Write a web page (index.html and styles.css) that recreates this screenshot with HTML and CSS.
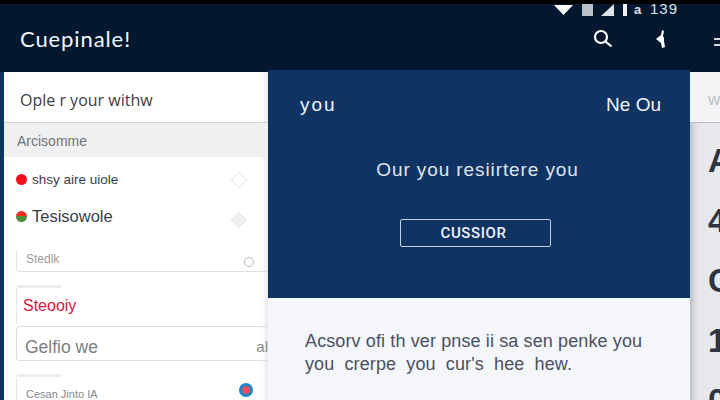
FILE: index.html
```html
<!DOCTYPE html>
<html lang="en">
  <head>
    <meta charset="UTF-8" />
    <title>Cuepinale</title>
    <link rel="stylesheet" href="styles.css">
  </head>
  <body>
    <div class="screen">
      <div class="topbar">
        <div class="topbar-main">
          <div class="status">
            <svg class="status-wifi" width="19" height="10" viewBox="0 0 19 10"><path d="M0 0h19L9.5 10z" fill="#fff"/></svg>
            <span class="status-sim"></span>
            <svg class="status-signal" width="13" height="12" viewBox="0 0 13 12"><path d="M13 0v12H0z" fill="#dfe4e8"/></svg>
            <span class="status-bar"></span>
            <span class="status-num">a</span>
            <span class="status-time">139</span>
          </div>
          <div class="appbar">
            <span class="app-title">Cuepinale!</span>
            <svg class="app-search" width="20" height="20" viewBox="0 0 20 20" fill="none" stroke="#fff" stroke-width="2.2"><circle cx="8" cy="8" r="6"/><path d="M12.5 12.5l6 5"/></svg>
            <svg class="app-back" width="10" height="18" viewBox="0 0 10 18"><path d="M7 0l2 1-1 5 1 2v3l1 6-3 1-1-5-5-4 5-4z" fill="#fff"/></svg>
          </div>
        </div>
        <div class="topbar-side">
          <span class="menu-line"></span>
          <span class="menu-line"></span>
        </div>
      </div>

      <div class="panels">
        <div class="sidebar">
          <div class="side-title">Ople r your withw</div>
          <div class="side-section">Arcisomme</div>
          <div class="side-row side-row-first">
            <span class="dot dot-red"></span>
            <span class="row-text">shsy aire uiole</span>
            <span class="diamond"></span>
          </div>
          <div class="side-row">
            <span class="dot dot-mixed"></span>
            <span class="row-text row-text-big">Tesisowole</span>
            <span class="diamond diamond-grey"></span>
          </div>
          <div class="field field-small">
            <span class="field-text">Stedlk</span>
            <span class="ring"></span>
          </div>
          <div class="field-label"></div>
          <div class="field field-open">
            <span class="field-red">Steooiy</span>
          </div>
          <div class="field field-large">
            <span class="field-big">Gelfio we</span>
            <span class="field-end">al</span>
          </div>
          <div class="field-label"></div>
          <div class="field field-last">
            <span class="field-tiny">Cesan Jinto IA</span>
            <span class="ring-blue"></span>
          </div>
        </div>

        <div class="center">
          <div class="hero">
            <div class="hero-top">
              <span class="hero-you">you</span>
              <span>Ne Ou</span>
            </div>
            <div class="hero-title">Our you resiirtere you</div>
            <div class="hero-button">CUSSIOR</div>
          </div>
          <div class="note">
            Acsorv ofi th ver pnse ii sa sen penke you<br>
            <span class="note-wide">you crerpe you cur's hee hew.</span>
          </div>
        </div>

        <div class="rail">
          <div class="rail-tab">W</div>
          <div class="rail-list">
            <span>A</span>
            <span>4</span>
            <span>C</span>
            <span>1</span>
            <span>0</span>
          </div>
        </div>
      </div>
    </div>
  </body>
</html>
```

FILE: styles.css
```css
* {
  box-sizing: border-box;
}

body {
  margin: 0;
  font-family: "Liberation Sans", Arial, sans-serif;
}

.screen {
  width: 720px;
  height: 400px;
  overflow: hidden;
  display: flex;
  flex-direction: column;
  background-color: #0f3463;
}

.topbar {
  height: 72px;
  flex-shrink: 0;
  display: flex;
  border-top: 4px solid #000;
  background-color: #03182f;
}

.topbar-main {
  width: 690px;
  flex-shrink: 0;
  padding-left: 20px;
  padding-right: 11px;
}

.status {
  height: 12px;
  display: flex;
  align-items: center;
  justify-content: flex-end;
  color: #dfe4e8;
}

.status-wifi {
  margin-right: 9px;
}

.status-sim {
  width: 11px;
  height: 12px;
  margin-right: 8px;
  background-color: #b9c0c6;
}

.status-signal {
  margin-right: 9px;
}

.status-bar {
  width: 4px;
  height: 12px;
  margin-right: 7px;
  background-color: #eef0f2;
}

.status-num {
  width: 9px;
  margin-right: 7px;
  margin-top: -2px;
  font-size: 13px;
  font-weight: bold;
}

.status-time {
  width: 29px;
  margin-top: -3px;
  font-size: 15px;
  letter-spacing: 1px;
}

.appbar {
  display: flex;
  align-items: center;
  margin-top: 9px;
}

.app-title {
  flex: 1;
  color: #f2f5f7;
  font-family: Lato, sans-serif;
  font-size: 22px;
  letter-spacing: 0.9px;
}

.app-search {
  margin-right: 42px;
}

.app-back {
  margin-right: 14px;
}

.topbar-side {
  flex: 1;
  display: flex;
  flex-direction: column;
  align-items: flex-end;
  gap: 4px;
  padding-top: 34px;
}

.menu-line {
  width: 6px;
  height: 2px;
  background-color: #d5d9dd;
}

.panels {
  flex: 1;
  display: flex;
  padding-left: 4px;
}

.sidebar {
  width: 264px;
  flex-shrink: 0;
  background-color: #fff;
  box-shadow: inset -10px 0 8px -8px #e2e4e8;
}

.side-title {
  height: 51px;
  padding: 18px 0 0 16px;
  color: #3c4045;
  font-family: "Open Sans", sans-serif;
  font-size: 16px;
  line-height: 20px;
  border-bottom: 1px solid #cfd2d4;
}

.side-section {
  height: 34px;
  padding: 10px 0 0 13px;
  color: #6f7478;
  font-size: 14px;
  line-height: 17px;
  background-color: #eef0f1;
}

.side-row {
  display: flex;
  align-items: center;
  height: 37px;
  padding-left: 12px;
  padding-right: 23px;
  color: #3a3e44;
}

.side-row-first {
  margin-top: 4px;
}

.dot {
  width: 11px;
  height: 11px;
  margin-right: 5px;
  border-radius: 50%;
}

.dot-red {
  background-color: #f2101f;
}

.dot-mixed {
  background: linear-gradient(#f0301f 50%, #4f8f3c 50%);
}

.row-text {
  flex: 1;
  font-size: 13.5px;
}

.row-text-big {
  font-size: 16.5px;
}

.diamond {
  width: 12px;
  height: 12px;
  transform: rotate(45deg);
  background-color: #fff;
  border: 1px solid #e9ebed;
}

.diamond-grey {
  margin-top: 6px;
  background-color: #eef0f1;
}

.field {
  display: flex;
  align-items: center;
  margin-left: 12px;
  padding-left: 9px;
  border-left: 1px solid #e2e4e7;
}

.field-small {
  height: 22px;
  margin-top: 15px;
  padding-right: 14px;
  border-bottom: 1px solid #dcdfe2;
  border-radius: 0 0 0 4px;
}

.field-text {
  flex: 1;
  margin-top: -4px;
  color: #9a9ea3;
  font-size: 12px;
}

.ring {
  width: 10px;
  height: 10px;
  margin-top: 3px;
  border: 1px solid #b5b9bd;
  border-radius: 50%;
}

.field-label {
  width: 44px;
  height: 3px;
  margin: 13px 0 0 13px;
  background-color: #eceef0;
}

.field-open {
  height: 36px;
  padding-left: 6px;
}

.field-red {
  color: #d8163c;
  font-size: 16px;
}

.field-large {
  height: 35px;
  margin-top: 2px;
  padding-left: 8px;
  border: 1px solid #dcdfe2;
  border-right: 0;
  border-radius: 4px 0 0 4px;
}

.field-big {
  flex: 1;
  margin-top: 8px;
  color: #7b7f84;
  font-size: 17.5px;
}

.field-end {
  margin-top: 6px;
  color: #85898d;
  font-size: 15px;
}

.field-last {
  height: 30px;
  padding-right: 15px;
  padding-top: 1px;
}

.field-tiny {
  flex: 1;
  color: #85898d;
  font-size: 11px;
  margin-top: 3px;
}

.ring-blue {
  width: 14px;
  height: 14px;
  margin-bottom: 5px;
  background-color: #e8505f;
  border: 3px solid #1a86c9;
  border-radius: 50%;
}

.center {
  width: 422px;
  flex-shrink: 0;
  display: flex;
  flex-direction: column;
  margin-top: -2px;
}

.hero {
  height: 228px;
  display: flex;
  flex-direction: column;
  align-items: center;
  padding: 24px 29px 0 32px;
  background-color: #0f3463;
  color: #f0f3f7;
}

.hero-top {
  width: 100%;
  display: flex;
  justify-content: space-between;
  font-size: 19px;
  line-height: 22px;
}

.hero-you {
  letter-spacing: 2px;
}

.hero-title {
  margin-top: 43px;
  margin-left: -6px;
  font-size: 19px;
  line-height: 22px;
  letter-spacing: 0.9px;
  color: #dfe5ec;
}

.hero-button {
  width: 151px;
  height: 28px;
  margin-top: 38px;
  margin-left: -10px;
  border: 1px solid #c3cfdc;
  border-radius: 2px;
  font-family: Roboto, sans-serif;
  font-size: 15px;
  font-weight: 500;
  letter-spacing: 0.6px;
  line-height: 27px;
  text-align: center;
  padding-right: 4px;
}

.note {
  flex: 1;
  padding: 32px 0 0 37px;
  background-color: #f4f6fa;
  color: #4a5160;
  font-size: 18px;
  letter-spacing: 0.12px;
  line-height: 23px;
}

.note-wide {
  word-spacing: 5px;
}

.rail {
  flex: 1;
  min-width: 0;
  overflow: hidden;
  background-color: #e6e8ec;
  box-shadow: inset 8px 0 6px -5px #b4b8be;
}

.rail-tab {
  height: 51px;
  padding: 21px 0 0 18px;
  color: #b5b9bd;
  font-size: 13px;
  background-color: #f2f3f5;
  border-bottom: 1px solid #b9bcc0;
}

.rail-list {
  display: flex;
  flex-direction: column;
  gap: 28px;
  padding: 22px 0 0 18px;
  color: #2d3542;
  font-size: 33px;
  line-height: 32px;
  font-weight: bold;
}
```
